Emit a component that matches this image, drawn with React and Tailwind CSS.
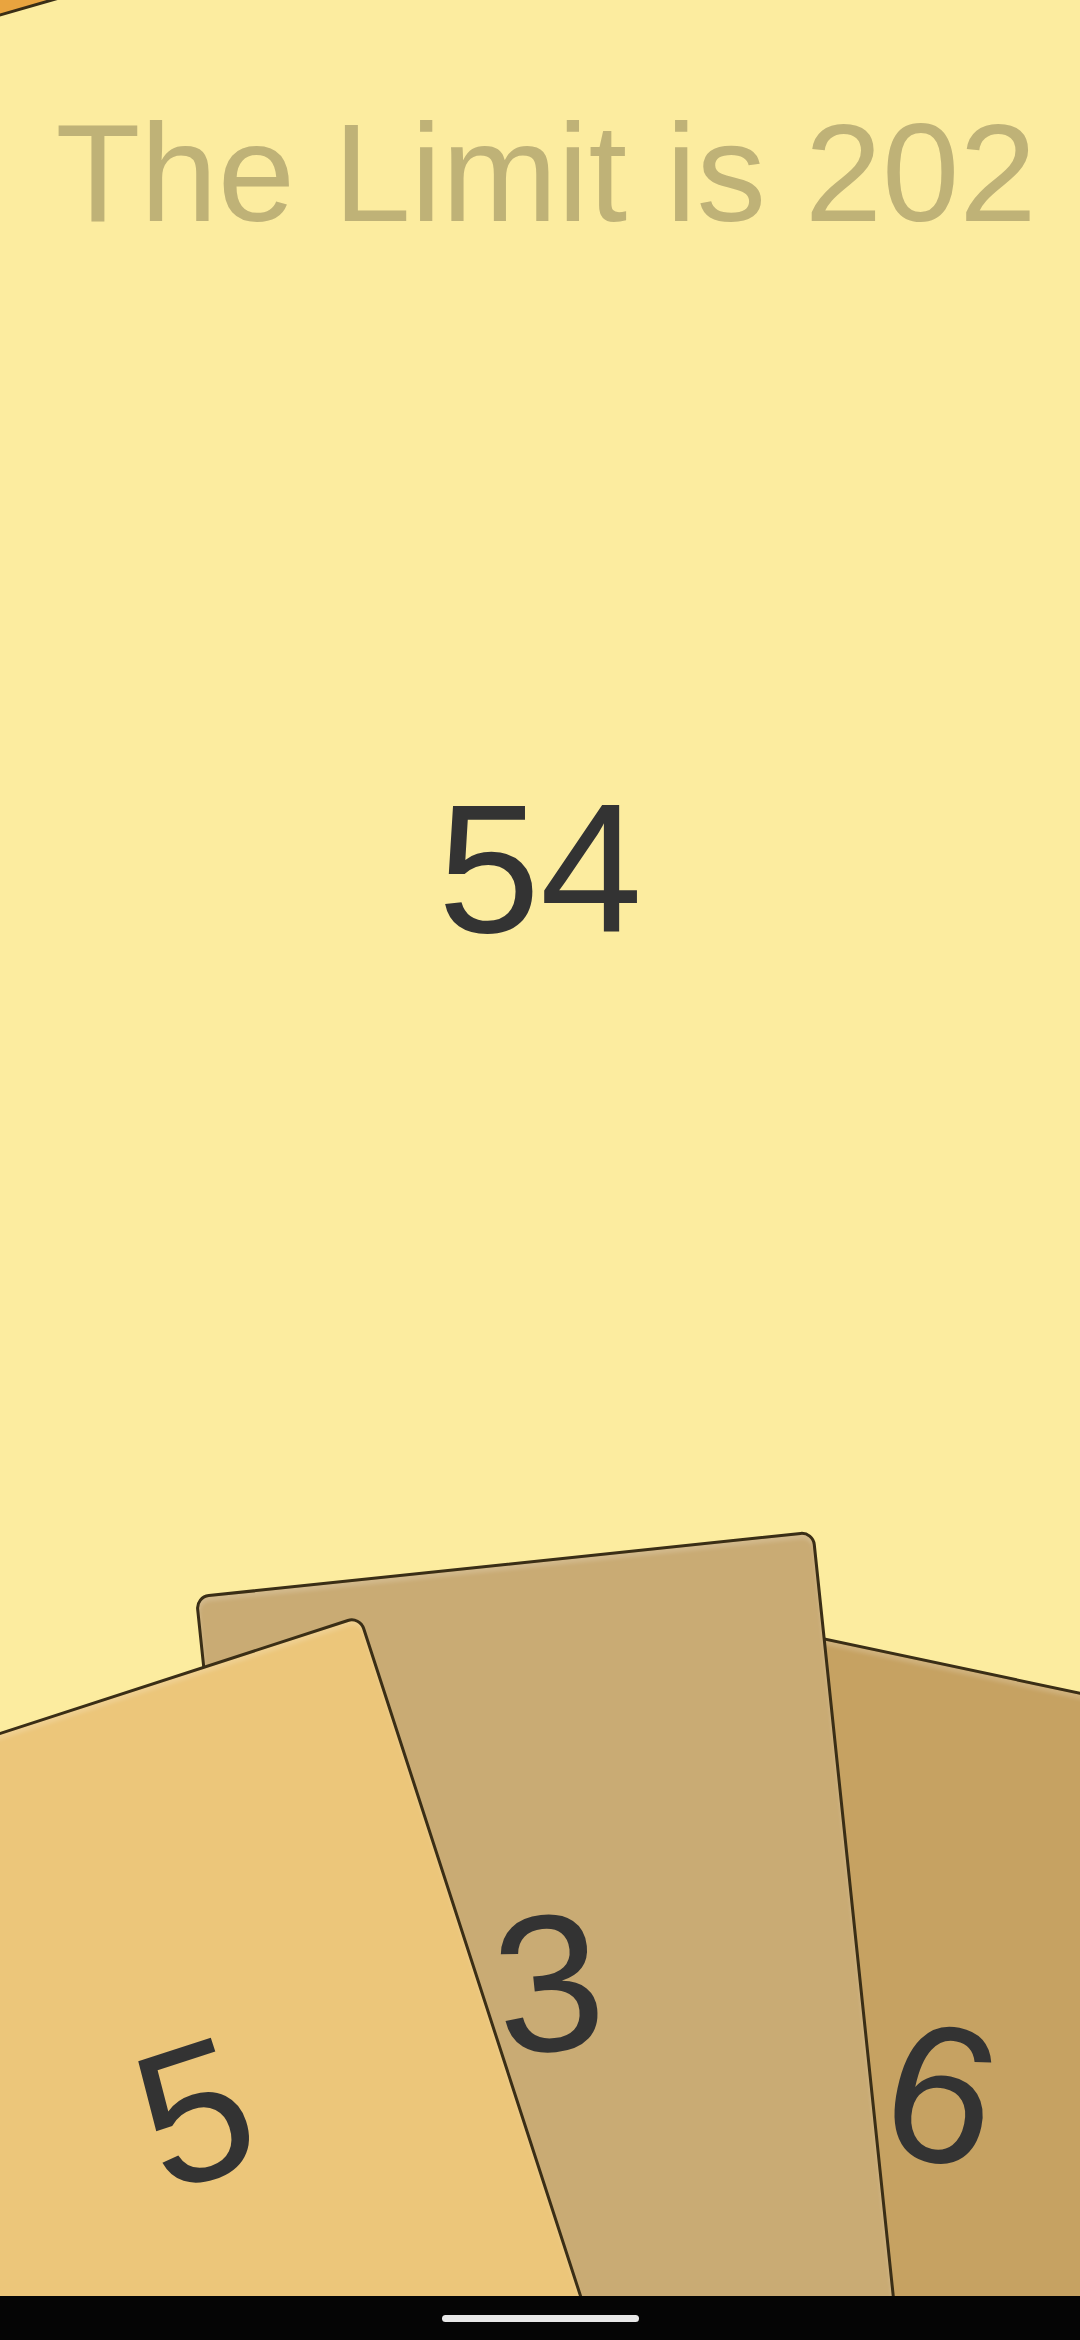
import React from "react";

// Cards in hand: top-centre point of each card, rotation in degrees
const hand = [
  { value: 6, x: 1029, y: 1681, rotate: 12, color: "bg-[#c6a262]" },
  { value: 3, x: 504, y: 1563, rotate: -6, color: "bg-[#c9ab74]" },
  { value: 5, x: 64, y: 1711, rotate: -18, color: "bg-[#ecc67a]" },
];

const CARD_W = 623;
const CARD_H = 940;

const Card = ({ card }) => (
  <div
    className={`absolute origin-top rounded-[14px] border-[3px] border-[#3a2e16] ${card.color} shadow-[inset_0_4px_4px_rgba(255,255,255,0.18)] flex flex-col items-center pt-[322px]`}
    style={{
      left: card.x - CARD_W / 2,
      top: card.y,
      width: CARD_W,
      height: CARD_H,
      transform: `rotate(${card.rotate}deg)`,
    }}
  >
    <span className="text-[195px] leading-none h-[195px] text-[#333333]">
      {card.value}
    </span>
  </div>
);

export default function App() {
  return (
    <div
      className="relative w-full h-[2340px] overflow-hidden bg-[#fcec9f] flex flex-col items-center"
      style={{ fontFamily: '"Liberation Sans", Arial, sans-serif' }}
    >
      {/* Draw pile peeking in at the top left */}
      <div className="absolute left-[-512px] top-[-866px] w-[623px] h-[940px] origin-bottom rotate-[-16deg] rounded-[14px] border-[3px] border-[#3a2e16] bg-[#e9a43f]" />

      <h1 className="pt-[103px] pl-[12px] text-[139px] leading-none h-[242px] text-[#bfb277] whitespace-nowrap">
        The Limit is 202
      </h1>

      <div className="mt-[534px] text-[184px] leading-none text-[#333333]">
        54
      </div>

      {hand.map((card) => (
        <Card key={card.value} card={card} />
      ))}

      {/* System navigation bar */}
      <div className="relative z-10 mt-auto w-full h-[44px] bg-[#050505] flex items-center justify-center">
        <div className="w-[197px] h-[7px] rounded-full bg-[#e8e8e8]" />
      </div>
    </div>
  );
}
